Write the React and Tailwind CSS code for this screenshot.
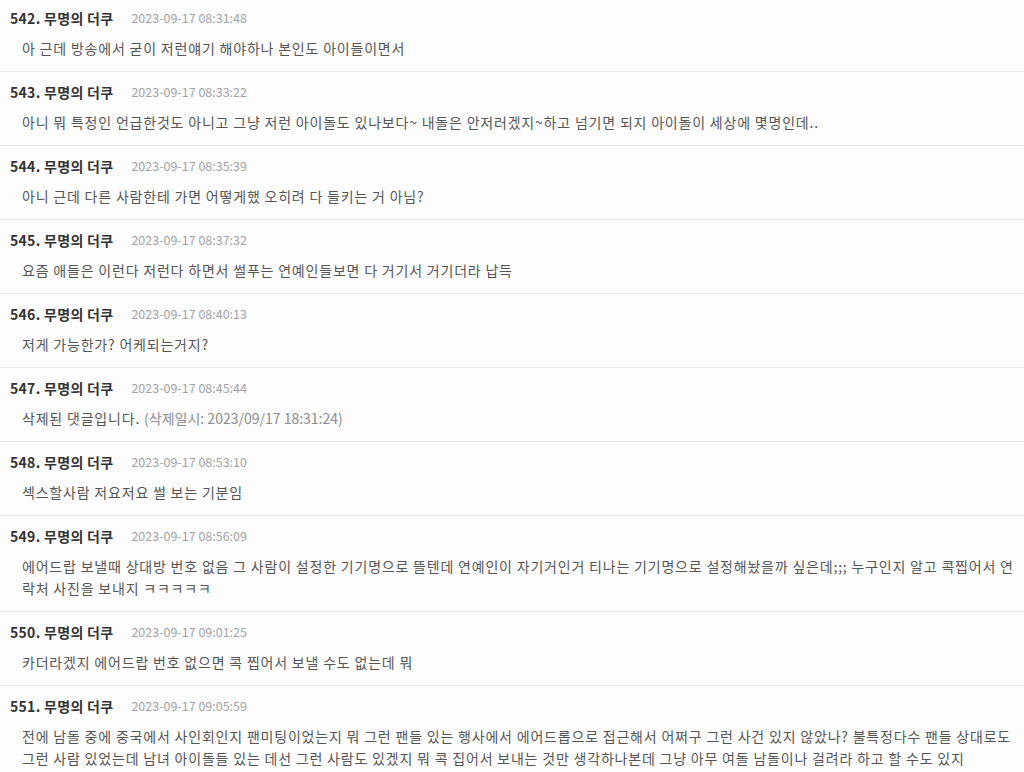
const comments = [
  {
    no: 542,
    date: "2023-09-17 08:31:48",
    text: "아 근데 방송에서 굳이 저런얘기 해야하나 본인도 아이들이면서",
  },
  {
    no: 543,
    date: "2023-09-17 08:33:22",
    text: "아니 뭐 특정인 언급한것도 아니고 그냥 저런 아이돌도 있나보다~ 내돌은 안저러겠지~하고 넘기면 되지 아이돌이 세상에 몇명인데..",
  },
  {
    no: 544,
    date: "2023-09-17 08:35:39",
    text: "아니 근데 다른 사람한테 가면 어떻게했 오히려 다 들키는 거 아님?",
  },
  {
    no: 545,
    date: "2023-09-17 08:37:32",
    text: "요즘 애들은 이런다 저런다 하면서 썰푸는 연예인들보면 다 거기서 거기더라 납득",
  },
  {
    no: 546,
    date: "2023-09-17 08:40:13",
    text: "저게 가능한가? 어케되는거지?",
  },
  {
    no: 547,
    date: "2023-09-17 08:45:44",
    text: "삭제된 댓글입니다.",
    deletedAt: "(삭제일시: 2023/09/17 18:31:24)",
  },
  {
    no: 548,
    date: "2023-09-17 08:53:10",
    text: "섹스할사람 저요저요 썰 보는 기분임",
  },
  {
    no: 549,
    date: "2023-09-17 08:56:09",
    text: "에어드랍 보낼때 상대방 번호 없음 그 사람이 설정한 기기명으로 뜰텐데 연예인이 자기거인거 티나는 기기명으로 설정해놨을까 싶은데;;; 누구인지 알고 콕찝어서 연락처 사진을 보내지 ㅋㅋㅋㅋㅋ",
  },
  {
    no: 550,
    date: "2023-09-17 09:01:25",
    text: "카더라겠지 에어드랍 번호 없으면 콕 찝어서 보낼 수도 없는데 뭐",
  },
  {
    no: 551,
    date: "2023-09-17 09:05:59",
    text: "전에 남돌 중에 중국에서 사인회인지 팬미팅이었는지 뭐 그런 팬들 있는 행사에서 에어드롭으로 접근해서 어쩌구 그런 사건 있지 않았나? 불특정다수 팬들 상대로도 그런 사람 있었는데 남녀 아이돌들 있는 데선 그런 사람도 있겠지 뭐 콕 집어서 보내는 것만 생각하나본데 그냥 아무 여돌 남돌이나 걸려라 하고 할 수도 있지",
  },
];

const CommentRow = ({ comment }) => (
  <div className="border-b border-[#e6e6e6] pt-[10px] pb-[12px] pl-[10px] pr-[8px]">
    <div className="flex items-center h-[20px]">
      <span className="text-[14px] font-bold tracking-[0.3px] text-[#333333]">
        {comment.no}. 무명의 더쿠
      </span>
      <span className="ml-[18px] text-[12.5px] text-[#a3a3a3]">
        {comment.date}
      </span>
    </div>
    <p className="mt-[9px] pl-[12px] text-[14px] leading-[22px] tracking-[0.8px] text-[#555555]">
      {comment.text}
      {comment.deletedAt && (
        <span className="ml-[4px] tracking-normal text-[#8c8c8c]">
          {comment.deletedAt}
        </span>
      )}
    </p>
  </div>
);

export default function App() {
  return (
    <div
      className="w-[1024px] h-[772px] overflow-hidden bg-[#fdfdfd] -mt-[2px]"
      style={{ fontFamily: '"Noto Sans CJK KR", "Noto Sans", sans-serif' }}
    >
      {comments.map((c) => (
        <CommentRow key={c.no} comment={c} />
      ))}
    </div>
  );
}
